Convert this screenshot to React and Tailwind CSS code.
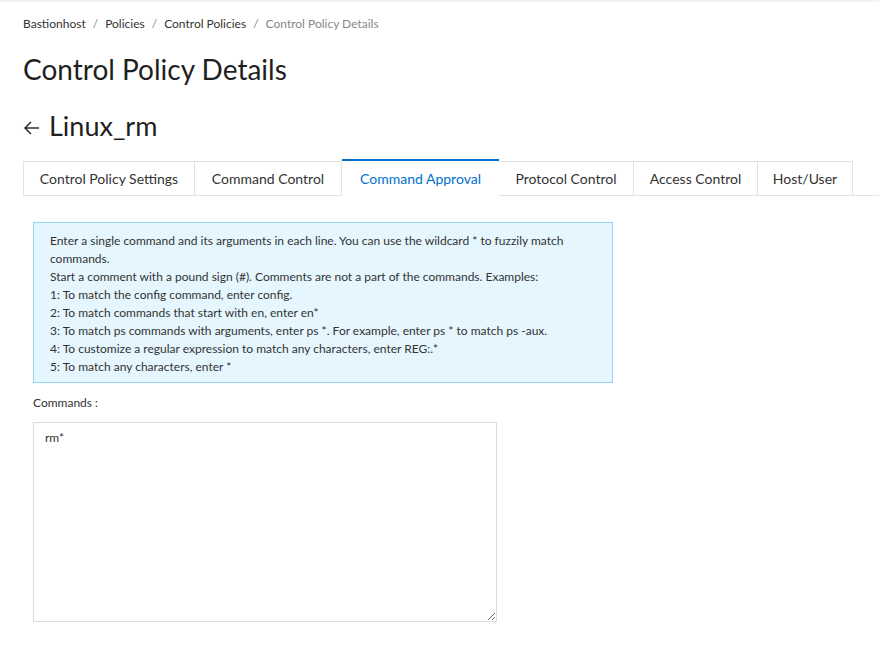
import React from "react";

const tabs = [
  ["Control Policy Settings", "w-[172px]"],
  ["Command Control", "w-[147px]"],
  ["Command Approval", "w-[157px]"],
  ["Protocol Control", "w-[135px]"],
  ["Access Control", "w-[124px]"],
  ["Host/User", "w-[95px]"],
];

export default function App() {
  const font = { fontFamily: '"Segoe UI", Lato, "Liberation Sans", sans-serif' };
  return (
    <div className="w-[879px] h-[647px] bg-white border-t-2 border-[#f3f3f3] text-[#333]" style={font}>
      <div className="pl-[23px]">
        <div className="flex items-center text-[12px] leading-[16px] pt-[14px] text-[#333]">
          <span>Bastionhost</span>
          <span className="mx-[7px] text-[#888]">/</span>
          <span>Policies</span>
          <span className="mx-[7px] text-[#888]">/</span>
          <span>Control Policies</span>
          <span className="mx-[7px] text-[#888]">/</span>
          <span className="text-[#888]">Control Policy Details</span>
        </div>
        <h1 className="text-[28px] leading-[36px] mt-[19px] text-[#1f1f1f]">Control Policy Details</h1>
        <div className="flex items-center mt-[21px] h-[36px]">
          <svg width="18" height="18" viewBox="0 0 18 18" className="mr-[8px] mt-[4px]">
            <path d="M16 9H2M8 3L2 9l6 6" fill="none" stroke="#333" strokeWidth="1.6" />
          </svg>
          <span className="text-[27px] leading-[36px] text-[#1f1f1f]">Linux_rm</span>
        </div>
      </div>
      <div className="flex mt-[16px] pl-[23px]">
        {tabs.map(([t, w], i) =>
          i === 2 ? (
            <div
              key={t}
              className={`${w} h-[37px] mt-[-1px] flex items-center justify-center text-[14px] text-[#0070cc] border-t-2 border-[#0070cc] bg-white`}
            >
              {t}
            </div>
          ) : (
            <div
              key={t}
              className={`${w} h-[35px] mt-[1px] flex items-center justify-center text-[14px] text-[#333] border border-[#e3e3e3] ${
                i === 0 ? "" : "border-l-0"
              }`}
            >
              {t}
            </div>
          )
        )}
        <div className="flex-1 border-b border-[#e3e3e3]"></div>
      </div>
      <div className="pl-[33px] pt-[26px]">
        <div className="w-[580px] bg-[#e5f6fe] border border-[#93d4f5] px-[16px] pt-[9px] pb-[6px] text-[12px] leading-[18px] text-[#333]">
          <p>Enter a single command and its arguments in each line. You can use the wildcard * to fuzzily match commands.</p>
          <p>Start a comment with a pound sign (#). Comments are not a part of the commands. Examples:</p>
          <p>1: To match the config command, enter config.</p>
          <p>2: To match commands that start with en, enter en*</p>
          <p>3: To match ps commands with arguments, enter ps *. For example, enter ps * to match ps -aux.</p>
          <p>4: To customize a regular expression to match any characters, enter REG:.*</p>
          <p>5: To match any characters, enter *</p>
        </div>
        <div className="text-[12px] leading-[16px] mt-[12px] text-[#333]">Commands :</div>
        <textarea
          defaultValue="rm*"
          className="block mt-[11px] w-[464px] h-[200px] border border-[#dcdcdc] px-[11px] py-[6px] text-[12px] leading-[18px] text-[#333] outline-none resize"
          style={font}
        />
      </div>
    </div>
  );
}
